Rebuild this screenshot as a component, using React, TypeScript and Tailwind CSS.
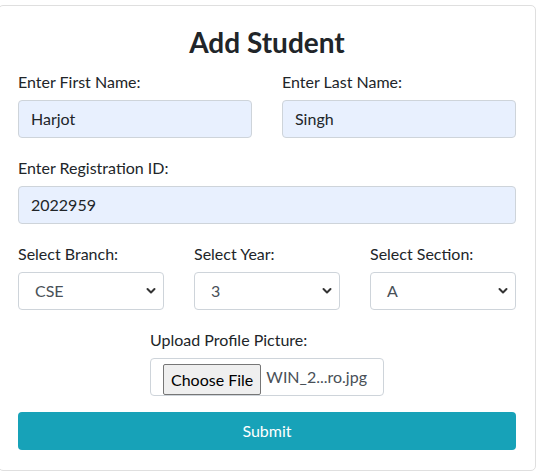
import React from "react";

const font = { fontFamily: "Lato, 'Liberation Sans', sans-serif" };

function Chevron() {
  return (
    <svg width="10" height="7" viewBox="0 0 10 7" className="absolute right-[7px] top-1/2 -translate-y-1/2">
      <polyline points="1.5,1.5 5,5 8.5,1.5" fill="none" stroke="#333" strokeWidth="2" strokeLinecap="round" strokeLinejoin="round" />
    </svg>
  );
}

function Field({ label, value }: { label: string; value: string }) {
  return (
    <div className="flex flex-col">
      <label className="text-[16px] leading-[24px] text-[#212529] mb-[6px]">{label}</label>
      <div className="h-[38px] rounded-[4px] border border-[#ced4da] bg-[#e8f0fe] pl-[12px] flex items-center text-[16px] text-[#212529]">
        {value}
      </div>
    </div>
  );
}

function SelectField({ label, value }: { label: string; value: string }) {
  return (
    <div className="flex flex-col">
      <label className="text-[16px] leading-[24px] text-[#212529] mb-[6px]">{label}</label>
      <div className="relative h-[38px] rounded-[4px] border border-[#ced4da] bg-white pl-[16px] flex items-center text-[16px] text-[#495057]">
        {value}
        <Chevron />
      </div>
    </div>
  );
}

export default function App() {
  return (
    <div className="w-[556px] h-[474px] bg-white overflow-hidden" style={font}>
      <div className="ml-[-2px] mt-[5px] w-[538px] border border-[#dfdfdf] rounded-[5px] px-[19px] pt-[19px] pb-[20px]">
        <h2 className="text-center text-[28px] leading-[34px] font-bold text-[#212529] mb-[11px]">Add Student</h2>
        <div className="grid grid-cols-2 gap-[30px] mb-[18px]">
          <Field label="Enter First Name:" value="Harjot" />
          <Field label="Enter Last Name:" value="Singh" />
        </div>
        <div className="mb-[18px]">
          <Field label="Enter Registration ID:" value="2022959" />
        </div>
        <div className="grid grid-cols-3 gap-[30px] mb-[18px]">
          <SelectField label="Select Branch:" value="CSE" />
          <SelectField label="Select Year:" value="3" />
          <SelectField label="Select Section:" value="A" />
        </div>
        <div className="flex justify-center mb-[16px]">
          <div className="w-[234px] flex flex-col">
            <label className="text-[16px] leading-[24px] text-[#212529] mb-[6px]">Upload Profile Picture:</label>
            <div className="h-[38px] rounded-[4px] border border-[#ced4da] bg-white flex items-end pl-[12px] pb-[0px]">
              <div className="h-[31px] px-[7px] flex items-center bg-[#efefef] border border-[#767676] rounded-[2px] text-[16px] text-black">
                Choose File
              </div>
              <span className="ml-[5px] self-center text-[16px] text-[#495057]">WIN_2...ro.jpg</span>
            </div>
          </div>
        </div>
        <button className="w-full h-[38px] rounded-[4px] bg-[#17a2b8] text-white text-[16px] flex items-center justify-center">
          Submit
        </button>
      </div>
    </div>
  );
}
